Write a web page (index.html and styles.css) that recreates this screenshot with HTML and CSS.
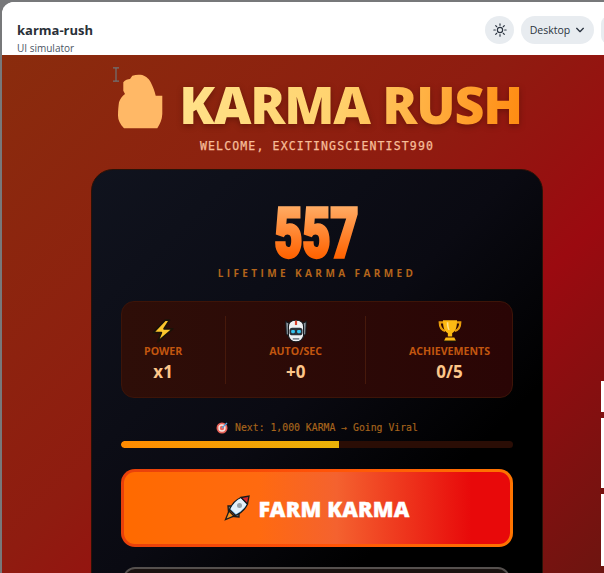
FILE: index.html
```html
<!DOCTYPE html>
<html lang="en">
<head>
<meta charset="utf-8">
<title>karma-rush</title>
<link rel="stylesheet" href="styles.css">
</head>
<body>
<div class="window">
  <header class="topbar">
    <div class="app-id">
      <div class="app-name">karma-rush</div>
      <div class="app-sub">UI simulator</div>
    </div>
    <div class="controls">
      <button class="round-btn" aria-label="Theme">
        <svg width="14" height="14" viewBox="0 0 24 24" fill="none" stroke="#2b3440" stroke-width="2" stroke-linecap="round"><circle cx="12" cy="12" r="4.5"/><path d="M12 1.5v2.5M12 20v2.5M1.5 12H4M20 12h2.5M4.6 4.6l1.8 1.8M17.6 17.6l1.8 1.8M4.6 19.4l1.8-1.8M17.6 6.4l1.8-1.8"/></svg>
      </button>
      <button class="pill-btn">Desktop
        <svg width="10" height="10" viewBox="0 0 12 12" fill="none" stroke="#2b3440" stroke-width="1.6" stroke-linecap="round" stroke-linejoin="round"><path d="M2 4l4 4 4-4"/></svg>
      </button>
      <span class="pill-stub"></span>
    </div>
  </header>
  <main class="stage">
    <svg class="cursor" width="8" height="15" viewBox="0 0 8 15" fill="none" stroke="#6f7376" stroke-width="1.2"><path d="M1 .8h6M1 14.2h6M4 .8v13.4"/></svg>
    <div class="page">
      <div class="hero">
        <svg class="duck" width="46" height="55" viewBox="0 0 46 55"><path fill="#ffb866" d="M6.300 8.300C8 6 11 5 13 5L15.300 1.700C19 .5 22 .5 25.300 1 30 3 32 5 33.700 8.300 36 13 38 18 38.700 21.700H45.300V40C45 46 43 50 40.300 54.300H7C3 50 1 46 1 41.700 1 36 1.500 32 2 28.300 3 25 5 22 8 20L6.300 16.700Z"/></svg>
        <h1 class="title">KARMA RUSH</h1>
      </div>
      <p class="welcome">WELCOME, EXCITINGSCIENTIST990</p>
      <section class="card">
        <svg class="score" width="100" height="60" viewBox="0 0 100 60">
          <defs><linearGradient id="scoreFill" gradientUnits="userSpaceOnUse" x1="0" y1="3" x2="0" y2="56"><stop offset="0" stop-color="#ffad66"/><stop offset="1" stop-color="#ff6200"/></linearGradient></defs>
          <text x="49.500" y="54.500" text-anchor="middle" textLength="84" lengthAdjust="spacingAndGlyphs" class="score-text" fill="url(#scoreFill)" stroke="url(#scoreFill)" stroke-width="3.400">557</text>
        </svg>
        <div class="score-label">LIFETIME KARMA FARMED</div>
        <div class="stats">
          <div class="stat">
            <svg class="stat-icon" width="26" height="26" viewBox="0 0 24 24"><path fill="#fcc62d" stroke="#1a1208" stroke-width="1.6" stroke-linejoin="round" d="M14 2 3 13.5h7.5L7 22l14-12h-8l5-8Z"/></svg>
            <div class="stat-label">POWER</div>
            <div class="stat-value">x1</div>
          </div>
          <i class="divider"></i>
          <div class="stat">
            <svg class="stat-icon" width="26" height="26" viewBox="0 0 24 24"><path fill="#8d99a3" stroke="#14181c" d="M2.500 3 6 5v12l-3-2ZM21.500 3 18 5v12l3-2Z"/><path fill="#eef1f3" stroke="#14181c" d="M5 8c0-4 3-6 7-6s7 2 7 6v8c0 3-3 6-7 6s-7-3-7-6Z"/><path fill="#d9432f" d="M11 2.500h2v4h-2Z"/><rect x="6" y="9" width="12" height="7" rx="2.500" fill="#2b3138"/><rect x="7.500" y="11" width="3.500" height="3" rx="1" fill="#35c4ef"/><rect x="13" y="11" width="3.500" height="3" rx="1" fill="#35c4ef"/><path fill="#7b858e" d="M9 18.500h6v1.500H9Z"/></svg>
            <div class="stat-label">AUTO/SEC</div>
            <div class="stat-value">+0</div>
          </div>
          <i class="divider"></i>
          <div class="stat">
            <svg class="stat-icon" width="26" height="26" viewBox="0 0 24 24"><path fill="none" stroke="#e89c0c" stroke-width="2" d="M6 4H2.500c0 5 1.500 7 5 8M18 4h3.500c0 5-1.500 7-5 8"/><path fill="#fdb913" d="M5.500 2h13c0 6-1 10-4.500 12v3h-4v-3C6.500 12 5.500 8 5.500 2Z"/><path fill="#fdb913" d="M8 18h8l1.500 3h-11Z"/><path fill="#1a1208" d="M6 21h12v1.500H6Z"/><path fill="#ffe08a" d="M9 4h1.500c0 3 .4 5 1.200 7H10.500C9.500 9.500 9 7 9 4Z"/></svg>
            <div class="stat-label">ACHIEVEMENTS</div>
            <div class="stat-value">0/5</div>
          </div>
        </div>
        <div class="next">
          <svg width="12" height="12" viewBox="0 0 12 12"><circle cx="6" cy="6" r="5.500" fill="#e8635a"/><circle cx="6" cy="6" r="3.700" fill="#f7e6e0"/><circle cx="6" cy="6" r="2.200" fill="#e8635a"/><path stroke="#4aa3df" stroke-width="1.300" d="M6 6l5-5"/></svg>
          <span>Next: 1,000 KARMA → Going Viral</span>
        </div>
        <div class="progress"><div class="progress-fill" style="width:55.7%"></div></div>
        <button class="farm-btn">
          <svg width="26" height="26" viewBox="0 0 26 26"><path fill="#f5931e" stroke="#1b1b1b" stroke-width="1.300" d="M5 16 1.500 24.500 10 21Z"/><path fill="#6d767d" stroke="#1b1b1b" stroke-width="1.300" d="M4 11h6L4.500 17ZM15 22v-6l-6 5.500Z"/><path fill="#6db9ee" stroke="#1b1b1b" stroke-width="1.300" d="M17 2.500C12 4.500 8 9 5.500 14.500L11.500 20.500C17 18 21.500 14 23.500 9Z"/><path fill="#e4f1fa" d="M17 3.200C12.500 5 9 9 6.500 14L12 19C16 17 20 13.500 22.500 9.500Z"/><path fill="#d8262c" stroke="#1b1b1b" stroke-width="1.300" d="M17 2.500 25 1 23.500 9Z"/><circle cx="15.500" cy="10.500" r="2.500" fill="#98a3ab"/></svg>
          <span>FARM KARMA</span>
        </button>
        <div class="next-panel"></div>
      </section>
    </div>
    <div class="edge-tabs"><i class="tab-a"></i><i class="tab-b"></i><i class="tab-c"></i></div>
  </main>
</div>
</body>
</html>
```
FILE: styles.css
```css
* { box-sizing: border-box; }
html, body { margin: 0; height: 100%; overflow: hidden; }
body { background: #77787a; font-family: "Open Sans", sans-serif; }
.window { height: 100%; margin: 2px 0 0 2px; display: flex; flex-direction: column; background: #fff; border-radius: 12px 0 0 0; overflow: hidden; }
.topbar { flex: none; height: 53px; padding: 0 0 0 15px; display: flex; align-items: flex-start; justify-content: space-between; background: #fff; overflow: hidden; }
.app-name { margin-top: 20px; font-size: 13px; line-height: 17px; font-weight: 700; color: #2a3038; }
.app-sub { margin-top: 3px; font-size: 10px; line-height: 13px; color: #4b5563; }
.controls { display: flex; align-items: center; gap: 7px; margin-top: 14px; margin-right: -13px; }
.round-btn { width: 29px; height: 28px; padding: 0; border: 0; border-radius: 50%; background: #e8ecf0; display: flex; align-items: center; justify-content: center; }
.pill-btn { width: 73px; height: 28px; padding: 0; border: 0; border-radius: 14px; background: #e8ecf0; display: flex; align-items: center; justify-content: center; gap: 5px; font: 500 10.500px "Open Sans", sans-serif; color: #2b3440; }
.pill-stub { width: 16px; height: 28px; border-radius: 14px; background: #e8ecf0; }
.stage { position: relative; flex: 1; min-height: 0; overflow: hidden; background: linear-gradient(135deg, #8a2c0d 0%, #8f1c10 45%, #9b0a10 68%, #6d1510 100%); }
.page { width: 630px; display: flex; flex-direction: column; align-items: center; }
.cursor { position: absolute; left: 110px; top: 12px; }
.hero { display: flex; align-items: center; gap: 16px; margin-top: 21px; margin-left: 5px; height: 56px; }
.duck { margin-top: -6px; }
.title { margin: 0; font-family: "Noto Sans", "Open Sans", sans-serif; font-size: 52px; line-height: 56px; font-weight: 900; letter-spacing: -1.200px; white-space: nowrap; background: linear-gradient(100deg, #ffe28a 0%, #ffd36f 45%, #ff8a10 100%); -webkit-background-clip: text; background-clip: text; color: transparent; filter: drop-shadow(0 2px 3px rgba(60, 10, 0, .45)); }
.welcome { margin: 6px 0 0; font: 400 11.500px/16px "DejaVu Sans Mono", monospace; letter-spacing: 1.150px; color: #f7bd98; white-space: nowrap; -webkit-text-stroke: .25px #f7bd98; }
.card { flex: none; width: 452px; height: 500px; margin: 15px 0 0; padding: 29px 29px 0; border: 1px solid #2a1208; border-radius: 22px; background: linear-gradient(135deg, #10131e 0%, #0a0a12 45%, #000 70%); display: flex; flex-direction: column; align-items: stretch; }
.score { display: block; flex: none; align-self: center; margin-top: 3px; overflow: visible; }
.score-text { font: 900 68px Roboto, sans-serif; }
.score-label { margin-top: 4px; font-size: 10px; line-height: 14px; font-weight: 700; letter-spacing: 3.400px; text-align: center; color: #b4651b; }
.stats { height: 97px; margin-top: 21px; padding: 1px 22px 0; display: flex; align-items: center; justify-content: space-between; border: 1px solid #3d1408; border-radius: 13px; background: linear-gradient(90deg, #2e0e08, #2a0505); }
.stat { display: flex; flex-direction: column; align-items: center; }
.stat-icon { display: block; }
.stat-value { margin-top: 4px; font-size: 17px; line-height: 20px; font-weight: 700; color: #fdc68a; }
.stat-label { margin-top: 0; font-size: 10.600px; line-height: 14px; font-weight: 700; color: #c2560f; }
.divider { width: 1px; height: 68px; margin-top: -1px; background: #47190b; }
.next { height: 14px; margin-top: 23px; display: flex; align-items: center; justify-content: center; gap: 7px; font: 400 9.800px/14px "DejaVu Sans Mono", monospace; color: #a8651c; -webkit-text-stroke: .15px #a8651c; }
.progress { height: 7px; margin-top: 6px; border-radius: 4px; background: #2a0d05; overflow: hidden; }
.progress-fill { height: 100%; border-radius: 4px 0 0 4px; background: linear-gradient(90deg, #ff8a00, #eab308); }
.farm-btn { height: 78px; margin-top: 21px; padding: 0; border: 3px solid transparent; border-radius: 14px; background: linear-gradient(90deg, #ff6a00 0%, #ff6a10 35%, #f4622f 55%, #e8090a 90%) padding-box, linear-gradient(90deg, #e8400a, #ff5208 50%, #ff7400) border-box; display: flex; align-items: center; justify-content: center; gap: 8px; color: #fff; font: 900 21.500px "Noto Sans", sans-serif; letter-spacing: .2px; -webkit-text-stroke: .4px #fff; }
.next-panel { height: 40px; margin: 20px 3px 0 2px; border: 2px solid #55504e; border-radius: 12px; background: #1a1210; }
.edge-tabs { position: absolute; right: 0; top: 326px; width: 3px; display: flex; flex-direction: column; gap: 6px; }
.edge-tabs i { display: block; background: #fff; }
.tab-a { height: 31px; }
.tab-b { height: 70px; }
.tab-c { height: 72px; }
```
